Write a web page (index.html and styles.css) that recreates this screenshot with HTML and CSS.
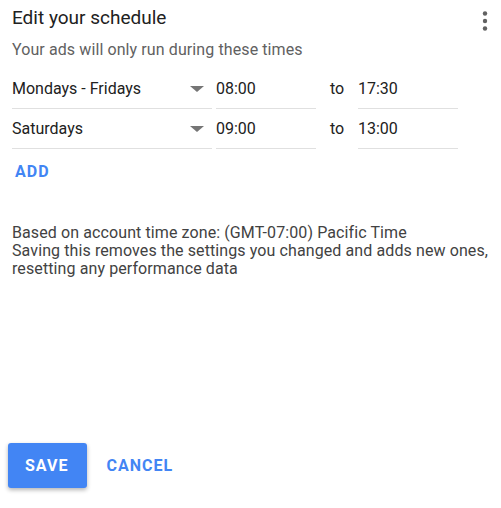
FILE: index.html
```html
<!DOCTYPE html>
<html lang="en">
<head>
    <meta charset="UTF-8" />
    <title>Edit your schedule</title>
    <link rel="stylesheet" href="styles.css">
</head>
<body>
    <main class="schedule">
        <header class="head">
            <h1>Edit your schedule</h1>
            <button class="more" aria-label="More options">
                <svg width="8" height="24" viewBox="0 0 8 24">
                    <circle cx="4" cy="4.5" r="2.2" />
                    <circle cx="4" cy="12" r="2.2" />
                    <circle cx="4" cy="19.5" r="2.2" />
                </svg>
            </button>
        </header>
        <p class="hint">Your ads will only run during these times</p>

        <div class="rows">
            <div class="row">
                <div class="field days">Mondays - Fridays <span class="arrow"></span></div>
                <div class="field time">08:00</div>
                <span class="to">to</span>
                <div class="field time">17:30</div>
            </div>
            <div class="row">
                <div class="field days">Saturdays <span class="arrow"></span></div>
                <div class="field time">09:00</div>
                <span class="to">to</span>
                <div class="field time">13:00</div>
            </div>
        </div>

        <button class="add">ADD</button>

        <p class="note">
            Based on account time zone: (GMT-07:00) Pacific Time<br>
            Saving this removes the settings you changed and adds new ones, resetting any performance data
        </p>

        <footer class="actions">
            <button class="save">SAVE</button>
            <button class="cancel">CANCEL</button>
        </footer>
    </main>
</body>
</html>
```

FILE: styles.css
```css
* {
    box-sizing: border-box;
}

body {
    margin: 0;
    font-family: Roboto, 'Liberation Sans', sans-serif;
    color: #212121;
    background: #fff;
}

.schedule {
    display: flex;
    flex-direction: column;
    min-height: 100vh;
    padding: 6px 12px 20px 12px;
}

.head {
    display: flex;
    justify-content: space-between;
    align-items: flex-start;
}

h1 {
    margin: 0;
    font-size: 19px;
    font-weight: 400;
    line-height: 24px;
}

.more {
    border: none;
    background: none;
    padding: 0;
    margin: 3px 0 0 0;
    line-height: 0;
}

.more svg {
    fill: #616161;
}

.hint {
    margin: 7px 0 0 0;
    font-size: 16px;
    letter-spacing: 0.1px;
    line-height: 20px;
    color: #616161;
}

/* linhas de horario */
.rows {
    display: flex;
    flex-direction: column;
    gap: 10px;
    margin-top: 19px;
}

.row {
    display: flex;
    align-items: flex-start;
    font-size: 16px;
    line-height: 20px;
}

.field {
    padding-bottom: 9px;
    border-bottom: 1px solid #e0e0e0;
}

.days {
    width: 200px;
    display: flex;
    justify-content: space-between;
    align-items: center;
    padding-right: 8px;
}

.arrow {
    width: 0;
    height: 0;
    border-left: 7px solid transparent;
    border-right: 7px solid transparent;
    border-top: 6px solid #757575;
}

.time {
    width: 100px;
    margin-left: 4px;
}

.to {
    width: 42px;
    padding-left: 14px;
}

.to + .time {
    margin-left: 0;
}

.add {
    align-self: flex-start;
    margin: 13px 0 0 3px;
    padding: 0;
    border: none;
    background: none;
    font-family: inherit;
    font-size: 16px;
    font-weight: 700;
    letter-spacing: 1px;
    line-height: 20px;
    color: #4285f4;
}

.note {
    margin: 42px 0 0 0;
    font-size: 16px;
    letter-spacing: 0.1px;
    line-height: 18px;
    color: #424242;
}

.actions {
    margin-top: auto;
    display: flex;
    align-items: center;
    gap: 19px;
    margin-left: -4px;
}

.save {
    height: 45px;
    padding: 0 19px 0 17px;
    border: none;
    border-radius: 3px;
    background: #4285f4;
    color: #fff;
    font-family: inherit;
    font-size: 16px;
    font-weight: 700;
    letter-spacing: 1px;
    box-shadow: 0 2px 4px rgba(0,0,0,0.3);
}

.cancel {
    padding: 0;
    border: none;
    background: none;
    color: #4285f4;
    font-family: inherit;
    font-size: 16px;
    font-weight: 700;
    letter-spacing: 1px;
}
```
